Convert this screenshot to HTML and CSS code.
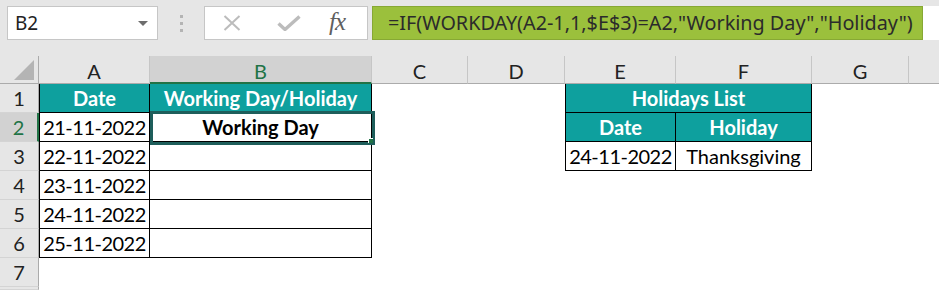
FILE: index.html
```html
<!DOCTYPE html>
<html lang="en">
<head>
    <meta charset="UTF-8">
    <title>Workday Holiday</title>
    <link rel="stylesheet" href="styles.css">
</head>
<body>
    <div class="toolbar">
        <div class="namebox">
            <span>B2</span>
            <svg class="drop" width="10" height="6" viewBox="0 0 10 6"><path d="M0 0h10L5 5z" fill="#6d6d6d"/></svg>
        </div>
        <div class="grip"><i></i><i></i><i></i></div>
        <div class="fxbox">
            <svg width="18" height="16" viewBox="0 0 18 16"><path d="M1.5 1l15 14M16.5 1l-15 14" stroke="#bcbcbc" stroke-width="2" fill="none"/></svg>
            <svg width="24" height="16" viewBox="0 0 24 16"><path d="M1.5 8.5l6.5 6L22.5 1.5" stroke="#bcbcbc" stroke-width="3.4" fill="none"/></svg>
            <span class="fx">fx</span>
        </div>
        <div class="formula">
            <div class="formula-text">=IF(WORKDAY(A2-1,1,$E$3)=A2,"Working Day","Holiday")</div>
        </div>
    </div>

    <div class="sheet">
        <div class="corner"><span class="tri"></span></div>
        <div class="colhead">A</div>
        <div class="colhead active">B</div>
        <div class="colhead">C</div>
        <div class="colhead">D</div>
        <div class="colhead">E</div>
        <div class="colhead">F</div>
        <div class="colhead">G</div>
        <div class="colhead last"></div>

        <div class="rowhead">1</div>
        <div class="cell head first">Date</div>
        <div class="cell head">Working Day/Holiday</div>
        <div class="cell"></div>
        <div class="cell"></div>
        <div class="cell head first span2">Holidays List</div>
        <div class="cell"></div>
        <div class="cell"></div>

        <div class="rowhead active">2</div>
        <div class="cell box first date">21-11-2022</div>
        <div class="cell box bold selected">Working Day<span class="selbox"><i class="handle"></i></span></div>
        <div class="cell"></div>
        <div class="cell"></div>
        <div class="cell head first">Date</div>
        <div class="cell head">Holiday</div>
        <div class="cell"></div>
        <div class="cell"></div>

        <div class="rowhead">3</div>
        <div class="cell box first date">22-11-2022</div>
        <div class="cell box"></div>
        <div class="cell"></div>
        <div class="cell"></div>
        <div class="cell box first date">24-11-2022</div>
        <div class="cell box">Thanksgiving</div>
        <div class="cell"></div>
        <div class="cell"></div>

        <div class="rowhead">4</div>
        <div class="cell box first date">23-11-2022</div>
        <div class="cell box"></div>
        <div class="cell"></div>
        <div class="cell"></div>
        <div class="cell"></div>
        <div class="cell"></div>
        <div class="cell"></div>
        <div class="cell"></div>

        <div class="rowhead">5</div>
        <div class="cell box first date">24-11-2022</div>
        <div class="cell box"></div>
        <div class="cell"></div>
        <div class="cell"></div>
        <div class="cell"></div>
        <div class="cell"></div>
        <div class="cell"></div>
        <div class="cell"></div>

        <div class="rowhead">6</div>
        <div class="cell box first date">25-11-2022</div>
        <div class="cell box"></div>
        <div class="cell"></div>
        <div class="cell"></div>
        <div class="cell"></div>
        <div class="cell"></div>
        <div class="cell"></div>
        <div class="cell"></div>

        <div class="rowhead">7</div>
        <div class="cell"></div>
        <div class="cell"></div>
        <div class="cell"></div>
        <div class="cell"></div>
        <div class="cell"></div>
        <div class="cell"></div>
        <div class="cell"></div>
        <div class="cell"></div>

        <div class="rowhead"></div>
    </div>
</body>
</html>
```

FILE: styles.css
```css
body {
    margin: 0;
    background: #e6e6e6;
    font-family: Lato, "Noto Sans", sans-serif;
    overflow: hidden;
}

.toolbar {
    display: flex;
    align-items: flex-start;
    height: 56px;
    padding-top: 6px;
    box-sizing: border-box;
}

.namebox {
    margin-left: 7px;
    width: 151px;
    height: 34px;
    box-sizing: border-box;
    background: #fff;
    border: 1px solid #c6c6c6;
    display: flex;
    align-items: center;
    justify-content: space-between;
    padding: 0 9px 0 7px;
    font-family: "Noto Sans", sans-serif;
    font-size: 19px;
    color: #222;
}

.drop {
    margin-top: 1px;
}

.grip {
    width: 46px;
    display: flex;
    flex-direction: column;
    align-items: center;
    gap: 4px;
    padding-top: 9px;
}

.grip i {
    width: 3px;
    height: 3px;
    background: #b4b4b4;
}

.fxbox {
    width: 164px;
    height: 34px;
    box-sizing: border-box;
    background: #fff;
    border: 1px solid #c6c6c6;
    display: flex;
    align-items: center;
    padding-left: 18px;
    gap: 36px;
}

.fx {
    font-family: "Liberation Serif", serif;
    font-style: italic;
    font-size: 25px;
    color: #5f5f5f;
    margin-left: -8px;
    margin-top: -2px;
    letter-spacing: -1px;
}

.formula {
    margin-left: 4px;
    flex: 1;
    height: 34px;
    background: #fff;
}

.formula-text {
    width: 551px;
    height: 34px;
    box-sizing: border-box;
    background: #9bc03c;
    border: 1px solid #87a834;
    padding-left: 15px;
    font-family: "Noto Sans", sans-serif;
    font-size: 19.8px;
    line-height: 31px;
    color: #2b2b2b;
    white-space: nowrap;
    overflow: hidden;
}

.sheet {
    display: grid;
    grid-template-columns: 39px 111px 222px 96px 97px 111px 136px 97px 30px;
    grid-template-rows: 28px repeat(7, 29px) 3px;
    background: #fff;
    font-size: 20px;
}

.corner {
    background: #e6e6e6;
    border-right: 1px solid #ababab;
    border-bottom: 1px solid #ababab;
    position: relative;
}

.tri {
    position: absolute;
    right: 4px;
    bottom: 3px;
    width: 0;
    height: 0;
    border-left: 20px solid transparent;
    border-bottom: 20px solid #b4b4b4;
}

.colhead {
    background: #e6e6e6;
    border-right: 1px solid #c6c6c6;
    border-bottom: 1px solid #ababab;
    display: flex;
    align-items: center;
    justify-content: center;
    color: #222;
    padding-top: 2px;
    box-sizing: border-box;
}

.colhead.last {
    border-right: none;
}

.colhead.active {
    background: #d2d2d2;
    color: #217346;
    border-bottom: 2px solid #217346;
    padding-top: 4px;
}

.rowhead {
    grid-column: 1;
    background: #e6e6e6;
    border-right: 1px solid #ababab;
    border-bottom: 1px solid #d4d4d4;
    display: flex;
    align-items: center;
    justify-content: center;
    color: #222;
    box-sizing: border-box;
}

.rowhead.active {
    background: #d2d2d2;
    color: #217346;
    border-right: 2px solid #217346;
}

.cell {
    box-sizing: border-box;
    display: flex;
    align-items: center;
    justify-content: center;
    color: #000;
    white-space: nowrap;
}

.cell.date {
    letter-spacing: -0.5px;
}

.cell.head {
    background: #0ea09e;
    color: #fff;
    font-weight: 700;
    border-right: 1px solid #000;
    border-bottom: 1px solid #000;
}

.cell.box {
    border-right: 1px solid #000;
    border-bottom: 1px solid #000;
}

.cell.first {
    border-left: 1px solid #000;
}

.cell.span2 {
    grid-column: span 2;
}

.cell.bold {
    font-weight: 700;
}

.cell.selected {
    position: relative;
}

.selbox {
    position: absolute;
    left: 0;
    top: -2px;
    right: -4px;
    bottom: -4px;
    border: 3px solid #1e5e5b;
}

.handle {
    position: absolute;
    right: -1px;
    bottom: -1px;
    width: 4px;
    height: 4px;
    background: #217346;
    border: 1px solid #fff;
    border-right: none;
    border-bottom: none;
}
```
